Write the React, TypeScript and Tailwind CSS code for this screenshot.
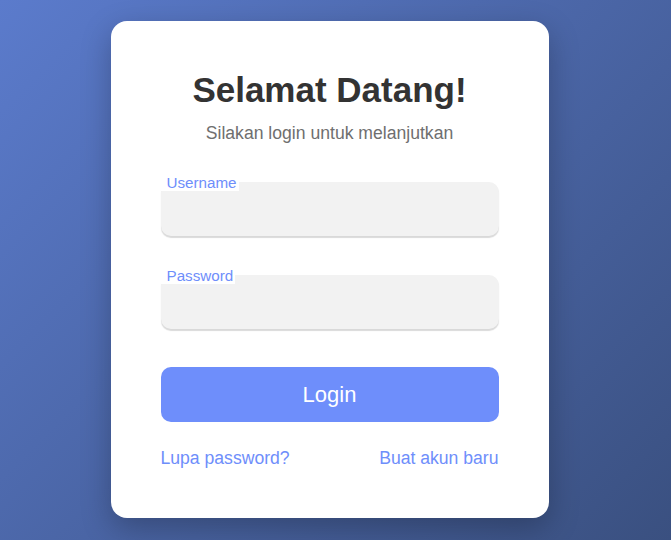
import { useState } from 'react';

export default function App() {
  const [username, setUsername] = useState('');
  const [password, setPassword] = useState('');

  return (
    <div className="min-h-screen w-full flex items-start justify-center pt-[21px] pr-[12px] bg-[linear-gradient(135deg,#5b7bcc_0%,#3a5080_100%)] font-['Liberation_Sans',Arial,sans-serif]">
      <div className="w-[438px] bg-white rounded-[16px] px-[50px] pt-[49px] pb-[50px] shadow-[0_10px_30px_rgba(0,0,0,0.25)]">
        <h1 className="text-center text-[35px] font-bold text-[#333] leading-[40px]">Selamat Datang!</h1>
        <p className="text-center text-[17.6px] text-[#6f6f6f] mt-[13px] leading-[20px]">Silakan login untuk melanjutkan</p>

        <form className="mt-[39px]" onSubmit={e => e.preventDefault()}>
          <Field label="Username" value={username} onChange={setUsername} type="text" />
          <div className="h-[39px]" />
          <Field label="Password" value={password} onChange={setPassword} type="password" />

          <button
            type="submit"
            className="mt-[38px] w-full h-[55px] rounded-[10px] bg-[#6e8efb] text-white text-[22px] hover:bg-[#5a7cf0] transition-colors"
          >
            Login
          </button>
        </form>

        <div className="flex justify-between mt-[26px] text-[17.6px] leading-[20px] text-[#6e8efb]">
          <a href="#">Lupa password?</a>
          <a href="#">Buat akun baru</a>
        </div>
      </div>
    </div>
  );
}

function Field({ label, value, onChange, type }: { label: string; value: string; onChange: (v: string) => void; type: string }) {
  return (
    <div className="relative">
      <input
        type={type}
        value={value}
        onChange={e => onChange(e.target.value)}
        className="w-full h-[54px] rounded-[10px] bg-[#f2f2f2] px-[14px] text-[16px] text-[#333] outline-none shadow-[0_2px_1px_rgba(0,0,0,0.15)]"
      />
      <label className="absolute left-0 top-[-8px] bg-white pl-[6px] pr-[2px] text-[15.2px] leading-[17px] text-[#6e8efb]">
        {label}
      </label>
    </div>
  );
}
